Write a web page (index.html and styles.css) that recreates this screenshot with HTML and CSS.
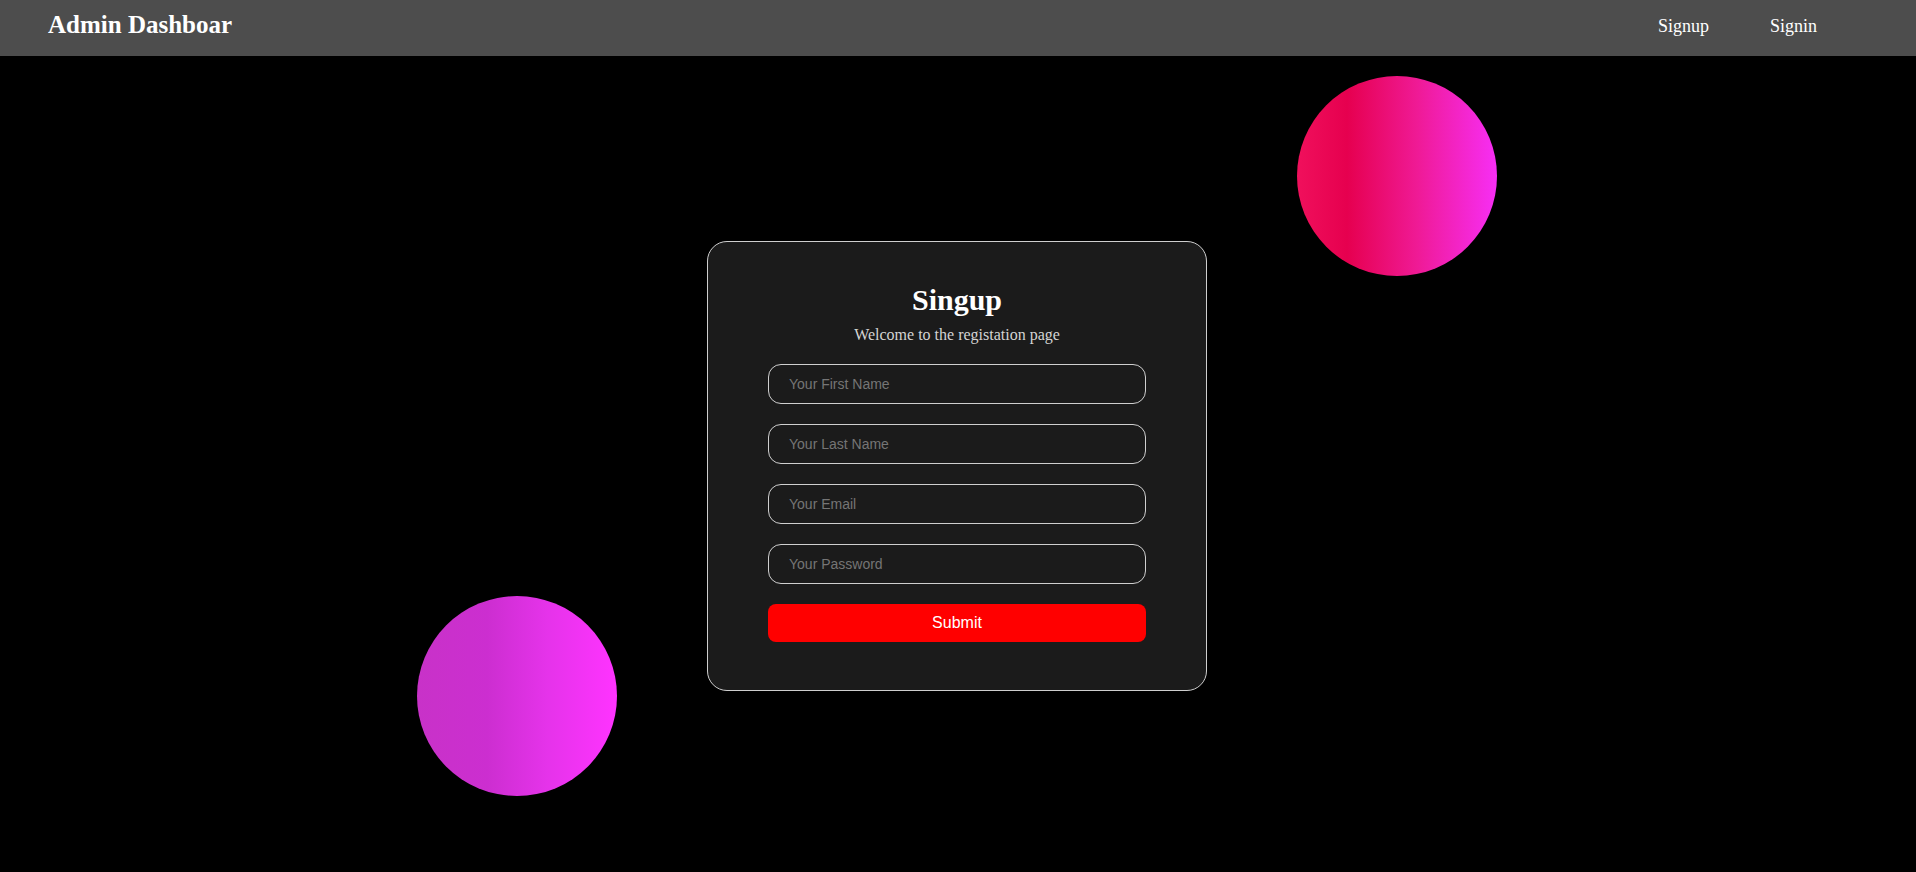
FILE: index.html
```html
<!DOCTYPE html>
<html lang="en">

<head>
  <meta charset="UTF-8">
  <meta name="viewport" content="width=device-width, initial-scale=1.0">
  <title>Admin Dashboard</title>
  <link rel="stylesheet" href="styles.css">
</head>

<body>
  <nav class="navbar">
    <h1 class="brand">Admin Dashboar</h1>
    <div class="links">
      <a href="#">Signup</a>
      <a href="#">Signin</a>
    </div>
  </nav>

  <main class="main">
    <div class="circle circle-top"></div>
    <div class="circle circle-bottom"></div>

    <form class="card">
      <h2>Singup</h2>
      <p>Welcome to the registation page</p>
      <input type="text" placeholder="Your First Name" />
      <input type="text" placeholder="Your Last Name" />
      <input type="email" placeholder="Your Email" />
      <input type="password" placeholder="Your Password" />
      <button type="submit">Submit</button>
    </form>
  </main>
</body>

</html>
```

FILE: styles.css
```css
* {
  box-sizing: border-box;
}

body {
  margin: 0;
  background: #000;
  font-family: "Liberation Serif", "Times New Roman", serif;
  color: #fff;
  height: 872px;
  display: flex;
  flex-direction: column;
  overflow: hidden;
}

.navbar {
  height: 56px;
  flex: none;
  background: #4d4d4d;
  display: flex;
  align-items: center;
  justify-content: space-between;
  padding: 0 99px 6px 48px;
}

.brand {
  margin: 0;
  font-size: 25px;
  line-height: 24px;
  font-weight: bold;
}

.links {
  display: flex;
  gap: 61px;
  padding-top: 1px;
}

.links a {
  color: #fff;
  text-decoration: none;
  font-size: 18px;
  line-height: 18px;
}

.main {
  flex: 1;
  position: relative;
  display: flex;
  align-items: center;
  justify-content: center;
}

.circle {
  position: absolute;
  width: 200px;
  height: 200px;
  border-radius: 50%;
}

.circle-top {
  left: 1297px;
  top: 20px;
  background: linear-gradient(90deg, #f0105c 0%, #e6004f 25%, #ef1a95 60%, #f72ef5 100%);
}

.circle-bottom {
  left: 417px;
  top: 540px;
  background: linear-gradient(90deg, #c832c8 0%, #cc2ed0 35%, #e533ea 65%, #ff33ff 100%);
}

.card {
  position: relative;
  width: 500px;
  margin: 3px 2px 0 0;
  background: #1b1b1b;
  border: 1px solid #cfcfcf;
  border-radius: 20px;
  padding: 41px 60px 48px;
  display: flex;
  flex-direction: column;
  align-items: stretch;
}

.card h2 {
  margin: 0;
  text-align: center;
  font-size: 30px;
  line-height: 34px;
  font-weight: bold;
}

.card p {
  margin: 9px 0 20px;
  text-align: center;
  font-size: 16px;
  line-height: 18px;
  color: #d4d4d4;
}

.card input {
  height: 40px;
  margin-bottom: 20px;
  background: transparent;
  border: 1px solid #cfcfcf;
  border-radius: 13px;
  padding: 0 20px;
  font-family: "Liberation Sans", Arial, sans-serif;
  font-size: 14px;
  color: #fff;
  outline: none;
}

.card input::placeholder {
  color: #757575;
}

.card button {
  height: 38px;
  border: none;
  border-radius: 8px;
  background: #ff0000;
  color: #fff;
  font-family: "Liberation Sans", Arial, sans-serif;
  font-size: 16px;
  cursor: pointer;
}
```
